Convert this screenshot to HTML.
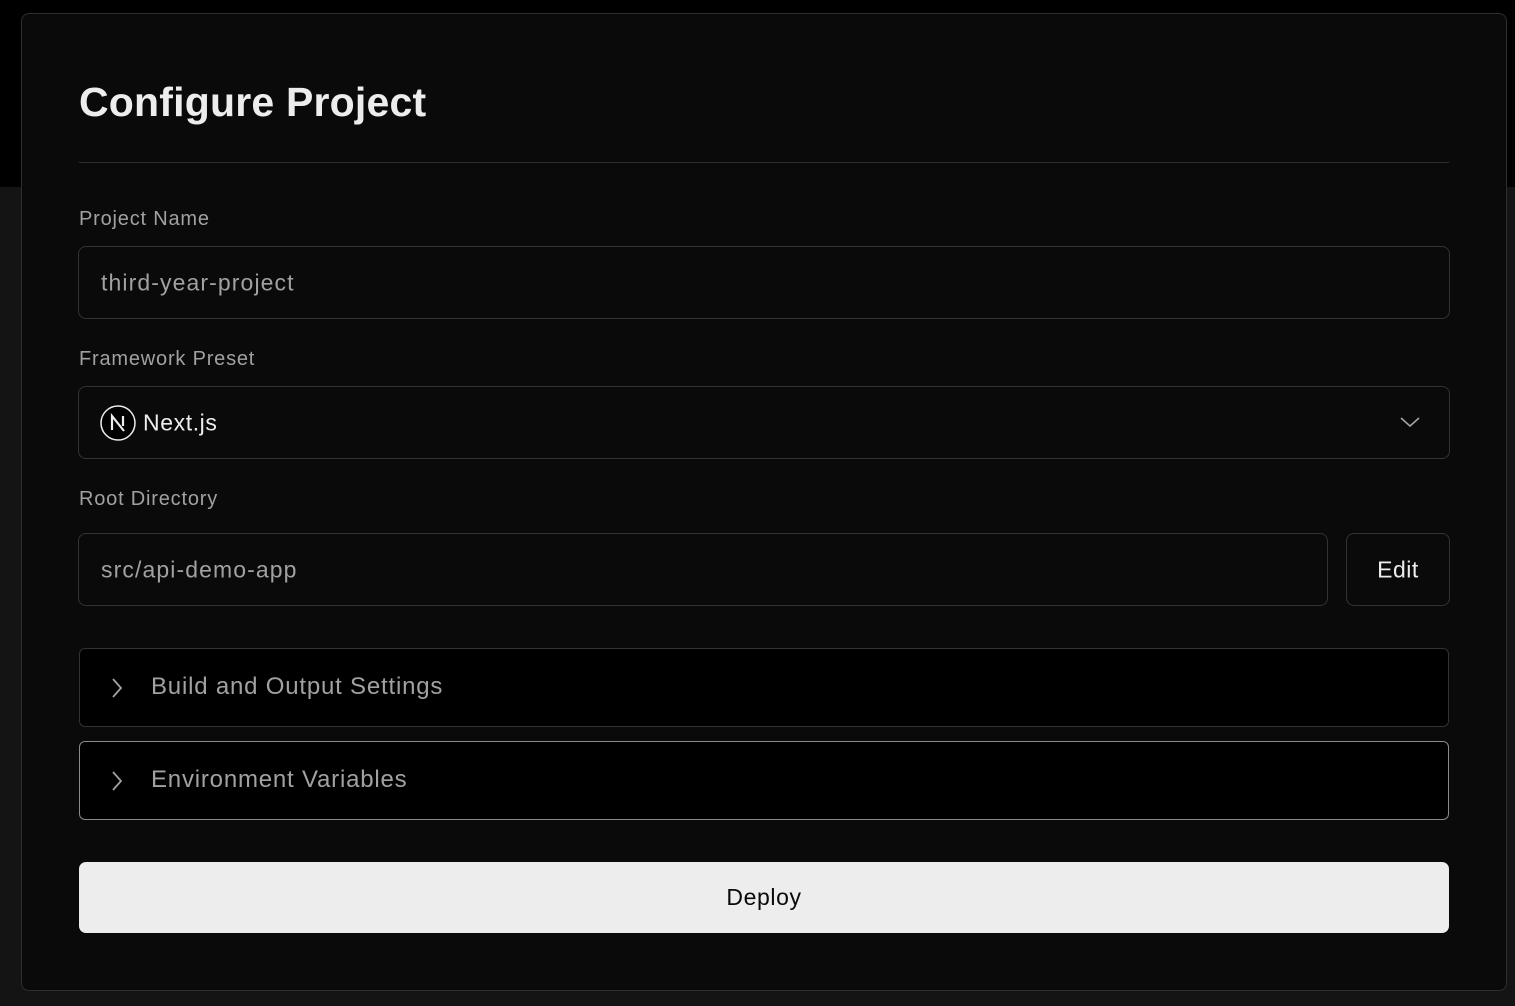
<!DOCTYPE html>
<html><head><style>
*{box-sizing:border-box;margin:0;padding:0}
body{width:1515px;height:1006px;background:#141414;position:relative;overflow:hidden;font-family:"Liberation Sans",sans-serif}
.top{position:absolute;left:0;top:0;width:1515px;height:187px;background:#000}
.panel{position:absolute;left:21px;top:13px;width:1486px;height:978px;background:#0a0a0a;border:1px solid #2e2e2e;border-radius:8px}
.abs{position:absolute}
h1{position:absolute;left:57px;top:65px;font-size:41px;font-weight:bold;color:#ededed;letter-spacing:0.2px}
.hr{position:absolute;left:57px;top:148px;width:1370px;height:1px;background:#2e2e2e}
.lbl{position:absolute;left:57px;font-size:20px;color:#a1a1a1;letter-spacing:0.8px}
.inp{position:absolute;border:1px solid #333;border-radius:8px;background:#0a0a0a;font-size:23px;color:#a1a1a1;letter-spacing:1.1px}
.inp span{position:absolute;left:22px;top:50%;transform:translateY(-50%)}
.sec{position:absolute;left:57px;width:1370px;height:79px;background:#000;border:1px solid #333;border-radius:6px;font-size:24px;color:#a1a1a1;letter-spacing:0.8px}
.sec span{position:absolute;left:71px;top:24px}
.sec svg{position:absolute;left:30px;top:28px}
.btn{position:absolute;left:57px;top:848px;width:1370px;height:71px;background:#ededed;border-radius:7px;color:#0a0a0a;font-size:23px;text-align:center;line-height:71px;letter-spacing:0.6px}
</style></head><body>
<div class="top"></div>
<div class="panel">
<h1>Configure Project</h1>
<div class="hr"></div>
<div class="lbl" style="top:194px">Project Name</div>
<div class="inp" style="left:56px;top:232px;width:1372px;height:73px"><span>third-year-project</span></div>
<div class="lbl" style="top:334px">Framework Preset</div>
<div class="inp" style="left:56px;top:372px;width:1372px;height:73px;color:#ededed">
<svg class="abs" style="left:21px;top:18px" width="36" height="36" viewBox="0 0 36 36"><circle cx="18" cy="18" r="17" fill="#000" stroke="#ededed" stroke-width="1.5"/><path d="M12 25V11L24 26M23 11v10" stroke="#ededed" stroke-width="2.2" fill="none"/></svg>
<span style="left:64px;letter-spacing:0.6px">Next.js</span>
<svg class="abs" style="left:1321px;top:28px" width="20" height="14" viewBox="0 0 20 14"><path d="M1 3l9 8 9-8" stroke="#a1a1a1" stroke-width="1.6" fill="none"/></svg>
</div>
<div class="lbl" style="top:474px">Root Directory</div>
<div class="inp" style="left:56px;top:519px;width:1250px;height:73px"><span>src/api-demo-app</span></div>
<div class="inp" style="left:1324px;top:519px;width:104px;height:73px;color:#ededed"><span style="left:0;width:102px;text-align:center;letter-spacing:0.5px">Edit</span></div>
<div class="sec" style="top:634px"><svg width="14" height="22" viewBox="0 0 14 22"><path d="M3 2l8 9-8 9" stroke="#a1a1a1" stroke-width="1.8" fill="none"/></svg><span>Build and Output Settings</span></div>
<div class="sec" style="top:727px;border-color:#8a8a8a"><svg width="14" height="22" viewBox="0 0 14 22"><path d="M3 2l8 9-8 9" stroke="#a1a1a1" stroke-width="1.8" fill="none"/></svg><span>Environment Variables</span></div>
<div class="btn">Deploy</div>
</div>
</body></html>
